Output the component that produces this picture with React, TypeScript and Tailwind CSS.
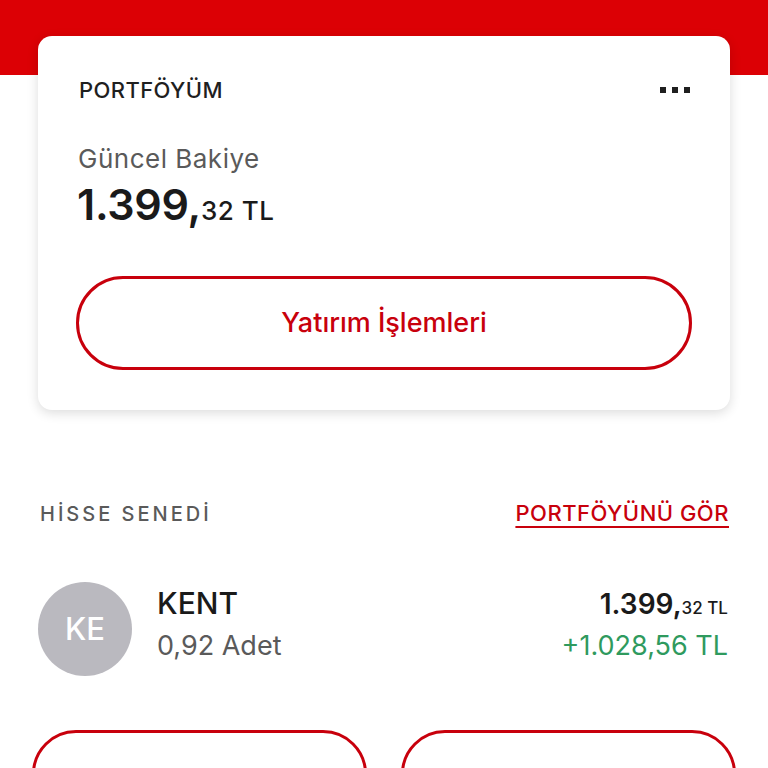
const font = { fontFamily: "Inter, 'Noto Sans', sans-serif" }

function Dots() {
  return (
    <div className="flex items-center gap-[6px]">
      <span className="h-[6px] w-[6px] bg-[#1f1f1f]" />
      <span className="h-[6px] w-[6px] bg-[#1f1f1f]" />
      <span className="h-[6px] w-[6px] bg-[#1f1f1f]" />
    </div>
  )
}

export default function App() {
  return (
    <div className="relative h-[768px] w-[768px] overflow-hidden bg-white" style={font}>
      {/* Red header band */}
      <div className="absolute left-0 right-0 top-0 h-[75px] bg-[#dc0005]" />

      <div className="relative flex flex-col px-[38px] pt-[36px]">
        {/* Portfolio card */}
        <div className="flex flex-col rounded-[14px] bg-white px-[38px] pb-[40px] pt-[40px] shadow-[0_3px_12px_rgba(0,0,0,0.14)]">
          <div className="flex items-center justify-between pl-[3px] pr-[2px]">
            <h2 className="text-[22px] font-medium leading-[28px] tracking-[0.4px] text-[#1f1f1f]">PORTFÖYÜM</h2>
            <Dots />
          </div>
          <p className="mt-[40px] pl-[2px] text-[26px] leading-[30px] tracking-[0.5px] text-[#5a5a5a]">Güncel Bakiye</p>
          <p className="mt-[7px] pl-[1px] leading-[46px] text-[#1a1a1a]">
            <span className="text-[43px] font-semibold tracking-[-0.3px]">1.399,</span>
            <span className="text-[26px] font-medium tracking-[0.5px]">32 TL</span>
          </p>
          <button className="mt-[39px] flex h-[94px] items-center justify-center rounded-full border-[3px] border-[#c8000c] text-[27px] font-medium text-[#c8000c]">
            Yatırım İşlemleri
          </button>
        </div>

        {/* Stocks header */}
        <div className="mt-[87px] flex items-center justify-between pl-[2px] pr-[1px]">
          <span className="text-[20px] font-medium tracking-[3px] text-[#5a5a5a]">HİSSE SENEDİ</span>
          <a className="text-[22px] font-medium tracking-[0.5px] text-[#c8000c] underline decoration-[2px] underline-offset-[5px]">
            PORTFÖYÜNÜ GÖR
          </a>
        </div>

        {/* Stock row */}
        <div className="mt-[52px] flex items-center">
          <div className="flex h-[94px] w-[94px] shrink-0 items-center justify-center rounded-full bg-[#bab9bf] text-[31px] font-medium text-white">
            KE
          </div>
          <div className="ml-[25px] flex flex-col pb-[11px]">
            <span className="text-[30px] font-medium leading-[36px] text-[#1a1a1a]">KENT</span>
            <span className="mt-[9px] text-[27px] leading-[32px] text-[#5a5a5a]">0,92 Adet</span>
          </div>
          <div className="ml-auto flex flex-col items-end pb-[11px] pr-[2px]">
            <span className="leading-[36px] text-[#1a1a1a]">
              <span className="text-[28px] font-semibold">1.399,</span>
              <span className="text-[17px] font-medium">32 TL</span>
            </span>
            <span className="mt-[4px] text-[27px] leading-[32px] text-[#2f9a5e]">+1.028,56 TL</span>
          </div>
        </div>

        {/* Bottom action buttons */}
        <div className="-mx-[6px] mt-[54px] grid grid-cols-2 gap-[34px]">
          <button className="flex h-[94px] items-center justify-center rounded-[44px] border-[3px] border-[#c8000c] pt-[30px] text-[26px] font-medium text-[#c8000c]">
            Hisse Al
          </button>
          <button className="flex h-[94px] items-center justify-center rounded-[44px] border-[3px] border-[#c8000c] pt-[30px] text-[26px] font-medium text-[#c8000c]">
            Halka Arz Talepleri
          </button>
        </div>
      </div>
    </div>
  )
}
